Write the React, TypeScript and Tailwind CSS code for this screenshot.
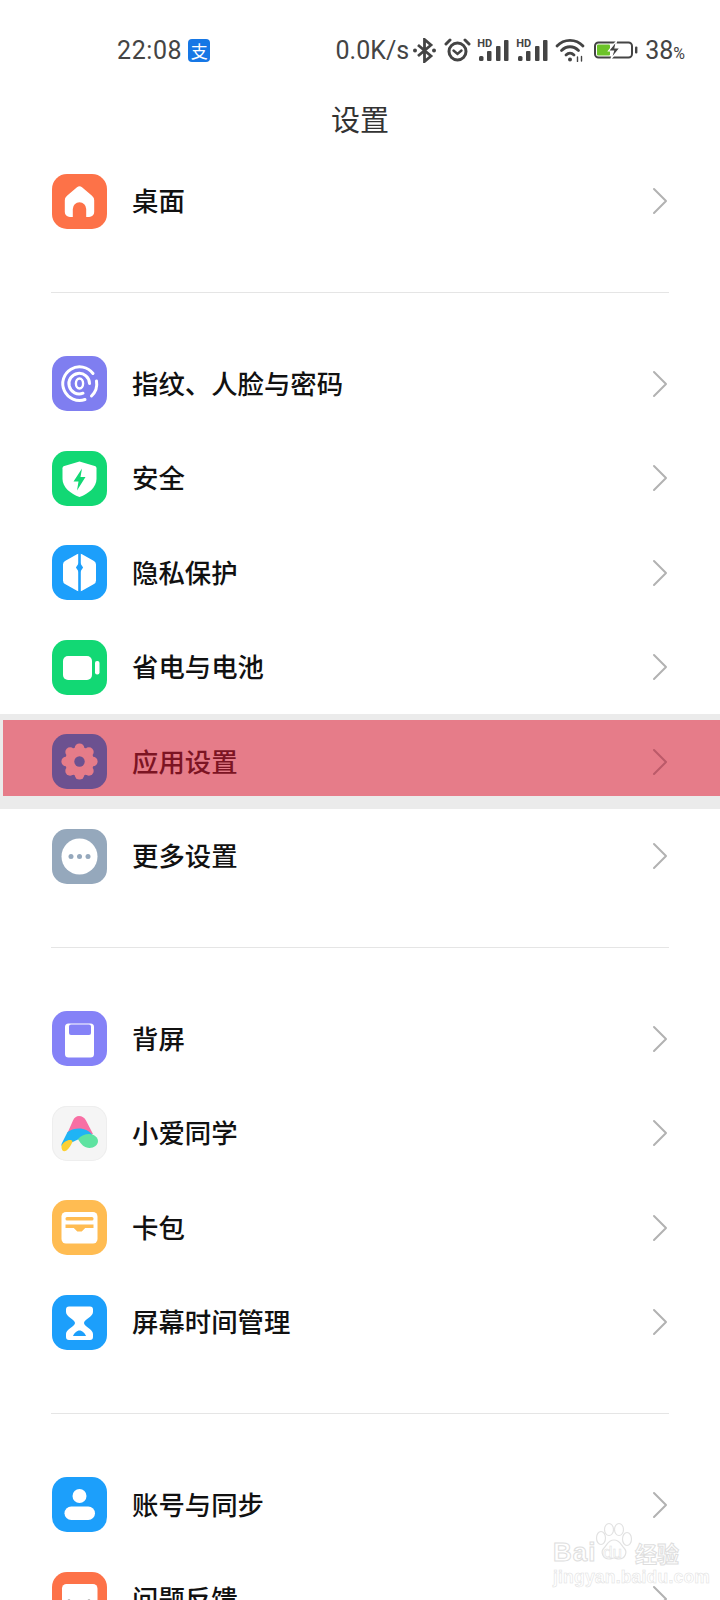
import type { ReactNode } from 'react'

const CJK = "font-['Noto_Sans_CJK_SC','Noto_Sans',sans-serif]"

function Glyph({ children }: { children: ReactNode }) {
  return (
    <svg viewBox="0 0 55 55" className="h-full w-full">
      {children}
    </svg>
  )
}

const HomeIcon = () => (
  <Glyph>
    <path
      fill="#fff"
      d="M25 13.2a4 4 0 0 1 5 0l10 8.5a6 6 0 0 1 2.2 4.6V38a5 5 0 0 1-5 5h-3V35a6.7 6.7 0 0 0-13.4 0v8h-3a5 5 0 0 1-5-5V26.3a6 6 0 0 1 2.2-4.6z"
    />
  </Glyph>
)

const FingerprintIcon = () => (
  <Glyph>
    <g fill="none" stroke="#fff" strokeWidth="3" strokeLinecap="round">
      <path d="M41 17.5A16.8 16.8 0 1 0 33 43.5" />
      <path d="M44.5 25A16.8 16.8 0 0 1 39.5 40" />
      <path d="M37.5 27.5A10.3 10.3 0 1 0 31 37.2" />
      <ellipse cx="27.5" cy="27.5" rx="3.6" ry="5" strokeWidth="2.4" />
    </g>
  </Glyph>
)

const ShieldIcon = () => (
  <Glyph>
    <path
      fill="#fff"
      d="M27.5 10.5 42.7 15c1.2.4 1.8 1.2 1.8 2.3V28c0 8-8 15-17 18-9-3-17-10-17-18V17.3c0-1.1.6-1.9 1.8-2.3z"
    />
    <path fill="#12d874" d="M30 17.5 21.5 30.5h5L25 39.5l8.5-13.5h-5z" />
  </Glyph>
)

const PrivacyIcon = () => (
  <Glyph>
    <path
      fill="#fff"
      d="M25 9.2a5 5 0 0 1 5 0l12 6.9a4 4 0 0 1 2 3.5v15.8a4 4 0 0 1-2 3.5l-12 6.9a5 5 0 0 1-5 0l-12-6.9a4 4 0 0 1-2-3.5V19.6a4 4 0 0 1 2-3.5z"
    />
    <path stroke="#1c9ffb" strokeWidth="2.6" d="M27.5 8v39" />
    <path fill="#1c9ffb" d="M27.5 17l3.6 5.5-3.6 5.5-3.6-5.5z" />
  </Glyph>
)

const BatteryIcon = () => (
  <Glyph>
    <rect x="11" y="16" width="29" height="24" rx="5" fill="#fff" />
    <rect x="43" y="21" width="4.5" height="13.5" rx="2" fill="#fff" />
  </Glyph>
)

const lobes = [0, 45, 90, 135, 180, 225, 270, 315]

const GearIcon = () => (
  <Glyph>
    <circle cx="27.5" cy="27.5" r="14.5" fill="#e67c89" />
    {lobes.map((deg) => (
      <circle
        key={deg}
        cx={27.5 + 13.3 * Math.cos((deg * Math.PI) / 180)}
        cy={27.5 + 13.3 * Math.sin((deg * Math.PI) / 180)}
        r="4.8"
        fill="#e67c89"
      />
    ))}
    <circle cx="27.5" cy="27.5" r="5.2" fill="#6c5190" />
  </Glyph>
)

const MoreIcon = () => (
  <Glyph>
    <circle cx="27.5" cy="27.5" r="18" fill="#fff" />
    <circle cx="19" cy="27.5" r="2.5" fill="#95a8bc" />
    <circle cx="27.5" cy="27.5" r="2.5" fill="#95a8bc" />
    <circle cx="36" cy="27.5" r="2.5" fill="#95a8bc" />
  </Glyph>
)

const BackScreenIcon = () => (
  <Glyph>
    <rect x="13" y="12.5" width="29" height="34" rx="3.5" fill="#fff" />
    <rect x="17" y="13.5" width="22" height="10.5" rx="2" fill="#8582f7" />
  </Glyph>
)

const AssistantIcon = () => (
  <Glyph>
    <path fill="#f86fa4" d="M27 10c3 0 5.5 1.5 7 4.5L41 28H15l6-13.5C22.2 11.5 24.5 10 27 10z" />
    <path
      fill="#1fb4f5"
      d="M9.5 38 15.5 26C19 23.5 23 22.5 27 22.5c5.5 0 10.5 2.5 14 7l3 5C38 30 31 31 26 33.500 21 36 16 38 12.500 41c-1.500 1-3.500-1-3-3z"
    />
    <path fill="#5fe3a1" d="M26 33c3-3.500 7-5 11-5 5 0 9 3.500 9 7 0 4-4 7-8.500 7-5 0-9-4-11.500-9z" />
    <path fill="#fdd032" d="M9.500 41c0-3 3-5.500 6-6.500 2-.7 4.500-.7 5 1-1 3-3.500 7-6 9-2.500 1.500-5 .5-5-3.500z" />
  </Glyph>
)

const WalletIcon = () => (
  <Glyph>
    <rect x="9.5" y="12" width="36" height="31.5" rx="4.5" fill="#fff" />
    <rect x="13.5" y="17" width="28" height="3.6" rx="1.5" fill="#ffbc52" />
    <path fill="#ffbc52" d="M13.5 24.5h28v3.6h-8.3l-3.5 3.4h-4.4l-3.5-3.4h-8.300z" />
  </Glyph>
)

const HourglassIcon = () => (
  <Glyph>
    <path
      fill="#fff"
      d="M17 11.5h21a3 3 0 0 1 3 3v2.5c0 5-9 7.5-9 11s9 6 9 11V42a3 3 0 0 1-3 3H17a3 3 0 0 1-3-3v-3c0-5 9-7.5 9-11s-9-6-9-11v-2.500a3 3 0 0 1 3-3z"
    />
    <path fill="#1c9ffb" d="M21 41c1-3 4-5.500 6.500-5.500S33 38 34 41z" />
  </Glyph>
)

const AccountIcon = () => (
  <Glyph>
    <circle cx="27.5" cy="19" r="7" fill="#fff" />
    <rect x="12.5" y="29.5" width="30.5" height="13.5" rx="6.75" fill="#fff" />
  </Glyph>
)

const FeedbackIcon = () => (
  <Glyph>
    <rect x="10" y="12" width="35.5" height="32" rx="4.5" fill="#fff" />
    <circle cx="17" cy="28.5" r="1.4" fill="#bbb" />
    <circle cx="37" cy="28.5" r="1.4" fill="#bbb" />
  </Glyph>
)

interface Item {
  label: string
  bg: string
  icon: ReactNode
}

const sections: Item[][] = [
  [{ label: '桌面', bg: 'bg-[#fd7248]', icon: <HomeIcon /> }],
  [
    { label: '指纹、人脸与密码', bg: 'bg-[#7f7ef0]', icon: <FingerprintIcon /> },
    { label: '安全', bg: 'bg-[#12d874]', icon: <ShieldIcon /> },
    { label: '隐私保护', bg: 'bg-[#1c9ffb]', icon: <PrivacyIcon /> },
    { label: '省电与电池', bg: 'bg-[#12d874]', icon: <BatteryIcon /> },
    { label: '应用设置', bg: 'bg-[#6c5190]', icon: <GearIcon /> },
    { label: '更多设置', bg: 'bg-[#95a8bc]', icon: <MoreIcon /> },
  ],
  [
    { label: '背屏', bg: 'bg-[#8582f7]', icon: <BackScreenIcon /> },
    { label: '小爱同学', bg: 'bg-[#f5f5f5] ring-1 ring-inset ring-[#eeeeee]', icon: <AssistantIcon /> },
    { label: '卡包', bg: 'bg-[#ffbc52]', icon: <WalletIcon /> },
    { label: '屏幕时间管理', bg: 'bg-[#1c9ffb]', icon: <HourglassIcon /> },
  ],
  [
    { label: '账号与同步', bg: 'bg-[#1c9ffb]', icon: <AccountIcon /> },
    { label: '问题反馈', bg: 'bg-[#fd7248]', icon: <FeedbackIcon /> },
  ],
]

function Chevron({ color }: { color: string }) {
  return (
    <svg width="16" height="28" viewBox="0 0 16 28" fill="none">
      <path d="M2 2l12 12L2 26" stroke={color} strokeWidth="2" strokeLinecap="round" strokeLinejoin="round" />
    </svg>
  )
}

function Row({ item }: { item: Item }) {
  return (
    <div className="flex h-[94.5px] items-center pl-[52px] pr-[52px]">
      <div className={`h-[55px] w-[55px] shrink-0 overflow-hidden rounded-[15px] ${item.bg}`}>{item.icon}</div>
      <span className={`ml-[25px] flex-1 pb-[2px] text-[26.4px] font-medium text-[#111] ${CJK}`}>{item.label}</span>
      <Chevron color="#b2b2b2" />
    </div>
  )
}

// pressed row, with the red marker someone painted over the screenshot
function MarkedRow({ item }: { item: Item }) {
  return (
    <div className="h-[94.5px] bg-[#ebebeb] pl-[3px] pt-[5.5px]">
      <div className="flex h-[76px] items-center bg-[#e67c89] pl-[49px] pr-[52px] pt-[8px]">
        <div className={`h-[55px] w-[55px] shrink-0 overflow-hidden rounded-[15px] ${item.bg}`}>{item.icon}</div>
        <span className={`ml-[25px] flex-1 pb-[2px] text-[26.4px] font-medium text-[#7c1423] ${CJK}`}>{item.label}</span>
        <Chevron color="#bb5a69" />
      </div>
    </div>
  )
}

function SignalIcon() {
  return (
    <div className="relative h-[22px] w-[32px]">
      <span className="absolute left-0 top-0 font-['Roboto',sans-serif] text-[11px] font-bold leading-[10px] text-[#444]">
        HD
      </span>
      <svg width="32" height="22" viewBox="0 0 32 22" fill="#444">
        <rect x="2" y="17" width="4.5" height="5" rx="1.5" />
        <rect x="10" y="12" width="4.5" height="10" rx="1" />
        <rect x="19" y="7" width="4.5" height="15" rx="1" />
        <rect x="27" y="1" width="4.5" height="21" rx="1" />
      </svg>
    </div>
  )
}

function StatusBar() {
  return (
    <div className="flex h-[100px] items-center pl-[117px] pr-[35px] font-['Roboto',sans-serif] text-[25px] text-[#444]">
      <span className="pt-[2px] tracking-[0.6px]">22:08</span>
      <div className={`ml-[6px] flex h-[23px] w-[22px] items-center justify-center rounded-[4px] bg-[#1677e5] text-[17px] leading-none text-white ${CJK}`}>
        支
      </div>
      <span className="ml-auto pt-[2px]">0.0K/s</span>
      <svg className="ml-[4px]" width="23" height="25" viewBox="0 0 23 25" fill="none" stroke="#444" strokeWidth="2.8">
        <path d="M5 7l13 11-6.5 5.5V1.500L18 7 5 18" />
        <circle cx="2" cy="12.5" r="2" fill="#444" stroke="none" />
        <circle cx="21" cy="12.5" r="2" fill="#444" stroke="none" />
      </svg>
      <svg className="ml-[8px]" width="27" height="24" viewBox="0 0 27 24" fill="none" stroke="#444" strokeWidth="3" strokeLinecap="round">
        <circle cx="13.5" cy="13.5" r="8.5" />
        <path d="M9.5 12.5l4 3.5 4-3.5" strokeWidth="2.4" />
        <path d="M2 6l4-4M25 6l-4-4" />
      </svg>
      <div className="ml-[6px]">
        <SignalIcon />
      </div>
      <div className="ml-[7px]">
        <SignalIcon />
      </div>
      <svg className="ml-[7px]" width="30" height="24" viewBox="0 0 30 24" fill="none" stroke="#444" strokeWidth="2.8" strokeLinecap="round">
        <path d="M2 8c7-7.5 19-7.5 26 0" />
        <path d="M6.5 12.5c5-5 12-5 17 0" />
        <path d="M11 17c2.500-2.500 5.500-2.500 8 0" />
        <circle cx="15" cy="21.5" r="2" fill="#444" stroke="none" />
        <path d="M22.5 19v4.5M26.5 18.5V23" strokeWidth="1.4" />
      </svg>
      <svg className="ml-[9px]" width="44" height="18" viewBox="0 0 44 18" fill="none">
        <rect x="1" y="1.5" width="37" height="15" rx="3.5" stroke="#444" strokeWidth="2" />
        <rect x="3" y="3.5" width="13" height="11" rx="1" fill="#6cc329" />
        <path d="M22.5 0l-8 10h5L17 18l9-11h-5z" fill="#444" stroke="#fff" strokeWidth="1.2" />
        <rect x="41" y="5.5" width="2.4" height="7" rx="1" fill="#444" />
      </svg>
      <span className="ml-[7px] pt-[2px]">
        38<span className="text-[16px]">%</span>
      </span>
    </div>
  )
}

function Watermark() {
  return (
    <div className="absolute left-[553px] top-[1522px] h-[62px] w-[128px] font-['Liberation_Sans',sans-serif] text-white [-webkit-text-stroke:1px_#dedede]">
      <svg className="absolute left-[42px] top-0" width="38" height="40" viewBox="0 0 38 38" fill="#fff" stroke="#e2e2e2" strokeWidth="1.2">
        <ellipse cx="6" cy="15" rx="4.5" ry="6.5" />
        <ellipse cx="14" cy="6.5" rx="4.5" ry="6" />
        <ellipse cx="24" cy="6.5" rx="4.5" ry="6" />
        <ellipse cx="32" cy="16" rx="4.5" ry="6.5" />
        <path d="M19 17c6 0 7 5 10 8 4 4 1 11-5 11-3 0-3-1-5-1s-2 1-5 1c-6 0-9-7-5-11 3-3 4-8 10-8z" />
      </svg>
      <span className="absolute left-0 top-[17px] text-[26px] font-bold leading-[26px] tracking-[1px]">Bai</span>
      <span className="absolute left-[50px] top-[22px] text-[17px] leading-[17px] [-webkit-text-stroke:0.5px_#dedede]">du</span>
      <span className={`absolute left-[82px] top-[19px] text-[22px] font-bold leading-[22px] ${CJK}`}>经验</span>
      <span className="absolute left-0 top-[47px] text-[17.5px] font-bold leading-[17px] tracking-[0.2px] [-webkit-text-stroke:0.5px_#dedede]">
        jingyan.baidu.com
      </span>
    </div>
  )
}

export default function App() {
  return (
    <div className="relative h-[1600px] w-[720px] overflow-hidden bg-white">
      <StatusBar />
      <div className={`mb-[17.75px] h-[36px] text-center text-[29px] leading-[36px] text-[#333] ${CJK}`}>设置</div>
      {sections.map((rows, i) => (
        <div key={i}>
          {i > 0 && <div className="mx-[51px] mb-[43px] mt-[44px] h-px bg-[#e5e5e5]" />}
          {rows.map((item) =>
            item.label === '应用设置' ? <MarkedRow key={item.label} item={item} /> : <Row key={item.label} item={item} />,
          )}
        </div>
      ))}
      <Watermark />
    </div>
  )
}
